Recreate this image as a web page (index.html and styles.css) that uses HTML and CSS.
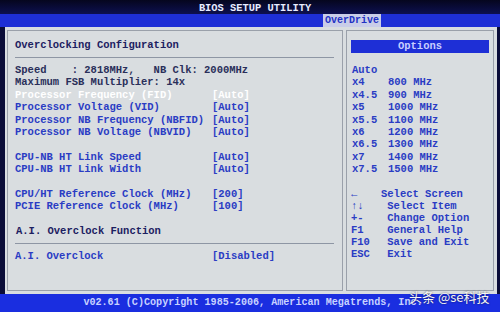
FILE: index.html
```html
<!DOCTYPE html>
<html lang="en">
<head>
  <meta charset="UTF-8" />
  <title>BIOS Setup Utility</title>
  <link rel="stylesheet" href="styles.css">
</head>
<body>

  <div class="title-bar">BIOS SETUP UTILITY</div>
  <div class="tab-bar">
    <span class="tab">OverDrive</span>
  </div>

  <div class="main">
    <div class="left-panel">
      <div class="heading">Overclocking Configuration</div>
      <div class="rule"></div>

      <div class="info">Speed    : 2818MHz,   NB Clk: 2000MHz</div>
      <div class="info">Maximum FSB Multiplier: 14x</div>

      <div class="setting selected"><span>Processor Frequency (FID)</span><span>[Auto]</span></div>
      <div class="setting"><span>Processor Voltage (VID)</span><span>[Auto]</span></div>
      <div class="setting"><span>Processor NB Frequency (NBFID)</span><span>[Auto]</span></div>
      <div class="setting"><span>Processor NB Voltage (NBVID)</span><span>[Auto]</span></div>

      <div class="gap"></div>
      <div class="setting"><span>CPU-NB HT Link Speed</span><span>[Auto]</span></div>
      <div class="setting"><span>CPU-NB HT Link Width</span><span>[Auto]</span></div>

      <div class="gap"></div>
      <div class="setting"><span>CPU/HT Reference Clock (MHz)</span><span>[200]</span></div>
      <div class="setting"><span>PCIE Reference Clock (MHz)</span><span>[100]</span></div>

      <div class="gap"></div>
      <div class="heading sub">A.I. Overclock Function</div>
      <div class="rule"></div>
      <div class="setting"><span>A.I. Overclock</span><span>[Disabled]</span></div>
    </div>

    <div class="right-panel">
      <div class="options-head">Options</div>
      <div class="options">
        <div class="opt"><span>Auto</span><span></span></div>
        <div class="opt"><span>x4</span><span>800 MHz</span></div>
        <div class="opt"><span>x4.5</span><span>900 MHz</span></div>
        <div class="opt"><span>x5</span><span>1000 MHz</span></div>
        <div class="opt"><span>x5.5</span><span>1100 MHz</span></div>
        <div class="opt"><span>x6</span><span>1200 MHz</span></div>
        <div class="opt"><span>x6.5</span><span>1300 MHz</span></div>
        <div class="opt"><span>x7</span><span>1400 MHz</span></div>
        <div class="opt"><span>x7.5</span><span>1500 MHz</span></div>
      </div>
      <div class="keys">
        <div class="key"><span>&larr;</span><span>Select Screen</span></div>
        <div class="key"><span>&uarr;&darr;</span><span> Select Item</span></div>
        <div class="key"><span>+-</span><span> Change Option</span></div>
        <div class="key"><span>F1</span><span> General Help</span></div>
        <div class="key"><span>F10</span><span> Save and Exit</span></div>
        <div class="key"><span>ESC</span><span> Exit</span></div>
      </div>
    </div>
  </div>

  <div class="footer">v02.61 (C)Copyright 1985-2006, American Megatrends, Inc.</div>

  <div class="watermark">头条 @se科技</div>

</body>
</html>
```

FILE: styles.css
```css
body {
  margin: 0;
  width: 500px;
  height: 312px;
  overflow: hidden;
  background-color: #0a0c38;
  font-family: "Liberation Mono", "DejaVu Sans Mono", monospace;
  font-size: 10.5px;
  font-weight: bold;
  position: relative;
}

.title-bar {
  height: 14px;
  line-height: 16px;
  text-align: center;
  color: #e8ecff;
  font-size: 10.4px;
  background: linear-gradient(#05061e, #0d1050);
  padding-left: 10px;
}

.tab-bar {
  height: 13px;
  background-color: #1e2fd6;
  padding-left: 323px;
}

.tab {
  display: inline-block;
  height: 13px;
  line-height: 13px;
  padding: 0 2px 0 2px;
  background-color: #c9cde8;
  color: #2231c4;
  font-size: 10px;
}

.main {
  display: flex;
  height: 267px;
  background-color: #d9dde0;
  margin-left: 5px;
  margin-right: 3px;
  padding: 3px 3px 3px 2px;
  box-sizing: border-box;
  gap: 3px;
}

.left-panel {
  width: 336px;
  border: 1px solid #9aa0aa;
  padding: 8px 8px 0 7px;
  box-sizing: border-box;
}

.heading {
  color: #1c2060;
  line-height: 13px;
}

.heading.sub {
  margin-left: 1px;
}

.rule {
  height: 1px;
  background-color: #8e96a4;
  margin: 5px 0 6px;
}

.info {
  color: #2a2f5a;
  line-height: 12.4px;
  white-space: pre;
}

.setting {
  display: grid;
  grid-template-columns: 197px auto;
  color: #2a3cc4;
  line-height: 12.4px;
}

.setting.selected {
  color: #ffffff;
}

.gap {
  height: 12.4px;
}

.right-panel {
  flex: 1;
  border: 1px solid #9aa0aa;
  padding: 9px 4px 0 4px;
  box-sizing: border-box;
}

.options-head {
  background-color: #1e2fd6;
  color: #c8ceff;
  text-align: center;
  line-height: 13px;
  margin-bottom: 11px;
}

.options {
  color: #2a3cc4;
  margin-left: 1px;
}

.opt {
  display: grid;
  grid-template-columns: 36px auto;
  line-height: 12.4px;
}

.keys {
  margin-top: 12px;
  color: #2a3cc4;
}

.key {
  display: grid;
  grid-template-columns: 30px auto;
  line-height: 12px;
  white-space: pre;
}

.footer {
  height: 18px;
  line-height: 17px;
  background-color: #1a2ee0;
  color: #c8d2ff;
  text-align: center;
  font-size: 10.1px;
  padding-left: 6px;
}

.watermark {
  position: absolute;
  left: 409px;
  top: 289px;
  color: #f4f4f4;
  font-family: "Noto Sans CJK SC", sans-serif;
  font-weight: normal;
  font-size: 13px;
  line-height: 16px;
  text-shadow: 0 0 2px rgba(0, 0, 0, 0.6);
}
```
